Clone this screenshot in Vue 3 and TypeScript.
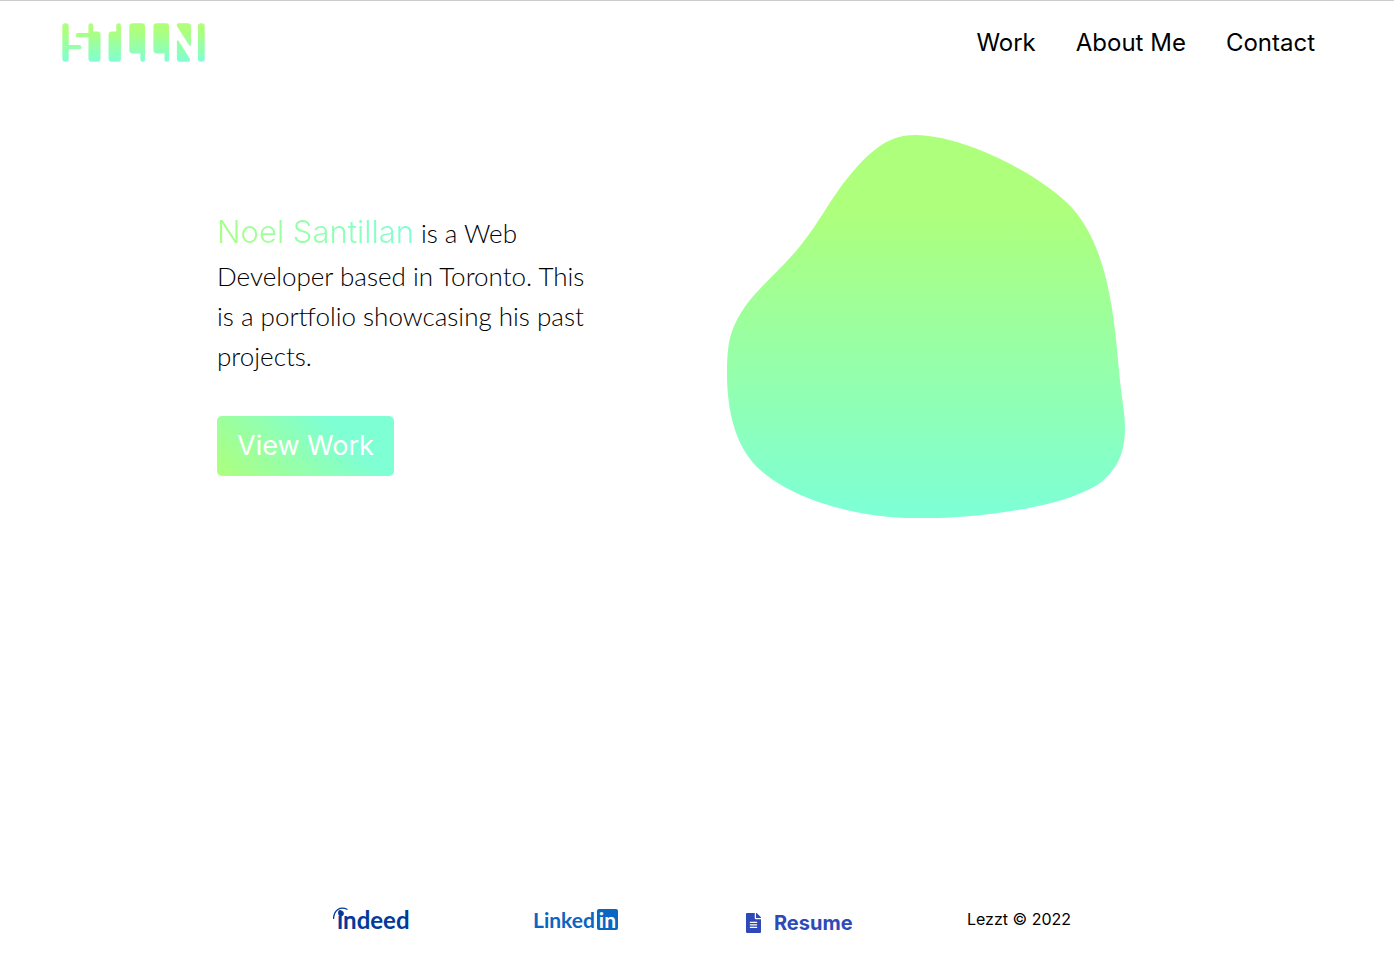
<script setup lang="ts">
interface NavLink {
  label: string
  href: string
}

const navLinks: NavLink[] = [
  { label: 'Work', href: '#work' },
  { label: 'About Me', href: '#about' },
  { label: 'Contact', href: '#contact' },
]
</script>

<template>
  <div class="page">
    <header class="header">
      <a class="logo" href="#home" aria-label="STLLN home">
        <svg viewBox="38 39 427 115" aria-hidden="true">
          <defs>
            <linearGradient id="logo-fill" gradientUnits="userSpaceOnUse" x1="0" y1="39" x2="0" y2="154">
              <stop offset="0.2" stop-color="#aeff7c" />
              <stop offset="1" stop-color="#7fffd4" />
            </linearGradient>
          </defs>
          <g fill="url(#logo-fill)">
            <path d="M48 39h1q9 0 9 9v56h31q7 0 7 6.500t-7 6.500H58v28q0 9-9 9h-1q-9 0-9-9V48q0-9 9-9z" />
            <path d="M124 39q7 0 7 7v18h12q10 0 10 10v70q0 10-10 10h-16q-10 0-10-10V81H86q-7 0-7-6.500t7-6.500h31V46q0-7 7-7z" />
            <path d="M207 39q7 0 7 7v98q0 10-10 10h-17q-10 0-10-10V74q0-10 10-10h13V46q0-7 7-7z" />
            <path d="M249 39h27q10 0 10 10v98q0 7-7 7t-7-7v-18h-23q-10 0-10-10V49q0-10 10-10z" />
            <path d="M321 39h27q10 0 10 10v98q0 7-7 7t-7-7v-18h-23q-10 0-10-10V49q0-10 10-10z" />
            <path d="M387 39h26q10 0 10 10v52q0 10-6 3L382 49q-4-10 5-10z" />
            <path d="M381 94q1-8 6-1l31 49q7 12-5 12h-24q-8 0-8-8z" />
            <rect x="444" y="39" width="20" height="115" rx="9" />
          </g>
        </svg>
      </a>
      <nav class="nav" aria-label="Main">
        <a v-for="link in navLinks" :key="link.href" :href="link.href">{{ link.label }}</a>
      </nav>
    </header>

    <main class="hero">
      <div class="intro">
        <p class="lead">
          <span class="name">Noel Santillan</span> is a Web Developer based in Toronto. This is a portfolio showcasing his past projects.
        </p>
        <button class="cta" type="button">View Work</button>
      </div>
      <svg class="blob" viewBox="36 30 1194 1150" aria-hidden="true">
        <defs>
          <linearGradient id="blob-fill" x1="0" y1="0" x2="0" y2="1">
            <stop offset="0.2" stop-color="#aeff7c" />
            <stop offset="0.97" stop-color="#7fffd4" />
          </linearGradient>
        </defs>
        <path
          fill="url(#blob-fill)"
          d="M600 30C740 30 965 140 1068 245C1170 355 1195 540 1210 715C1220 830 1230 860 1230 905C1230 990 1205 1030 1160 1070C1060 1145 800 1180 610 1180C420 1180 220 1120 125 1025C60 960 36 855 36 745C36 690 40 650 50 622C85 520 165 470 250 370C310 297 350 215 405 150C475 65 530 30 600 30Z"
        />
      </svg>
    </main>

    <footer class="footer">
      <a class="indeed" href="#indeed" aria-label="Indeed">
        <svg width="76" height="30" viewBox="0 0 76 30" aria-hidden="true">
          <path d="M0.500 15C1 6 7 2 14.500 5.500" fill="none" stroke="#003a9b" stroke-width="1.300" />
          <circle cx="8" cy="9.500" r="2.800" fill="#003a9b" />
          <text x="4" y="25" fill="#003a9b">indeed</text>
        </svg>
      </a>
      <a class="linkedin" href="#linkedin" aria-label="LinkedIn">
        <span>Linked</span><span class="badge">in</span>
      </a>
      <a class="resume" href="#resume">
        <svg width="15" height="20" viewBox="0 0 384 512" aria-hidden="true">
          <path
            fill="currentColor"
            d="M224 136V0H24C10.700 0 0 10.700 0 24v464c0 13.300 10.700 24 24 24h336c13.300 0 24-10.700 24-24V160H248c-13.200 0-24-10.800-24-24zm64 236c0 6.600-5.400 12-12 12H108c-6.600 0-12-5.400-12-12v-8c0-6.600 5.400-12 12-12h168c6.600 0 12 5.400 12 12v8zm0-64c0 6.600-5.400 12-12 12H108c-6.600 0-12-5.400-12-12v-8c0-6.600 5.400-12 12-12h168c6.600 0 12 5.400 12 12v8zm0-72v8c0 6.600-5.400 12-12 12H108c-6.600 0-12-5.400-12-12v-8c0-6.600 5.400-12 12-12h168c6.600 0 12 5.400 12 12zm96-114.100v6.100H256V0h6.100c6.400 0 12.500 2.500 17 7l97.900 98c4.500 4.500 7 10.600 7 16.900z"
          />
        </svg>
        <span>Resume</span>
      </a>
      <span class="copyright">Lezzt © 2022</span>
    </footer>
  </div>
</template>

<style>
body {
  margin: 0;
  background: #fff;
}
</style>

<style scoped>
.page {
  box-sizing: border-box;
  display: flex;
  flex-direction: column;
  min-height: 100vh;
  border-top: 1px solid #ccc;
  color: #000;
  font-family: Inter, 'Open Sans', sans-serif;
}

a {
  color: inherit;
  text-decoration: none;
}

.header {
  display: flex;
  align-items: center;
  justify-content: space-between;
  padding: 22px 79px 20px 62px;
}

.logo svg {
  display: block;
  width: 143px;
  height: 39px;
}

.nav {
  display: flex;
  gap: 40px;
  font-size: 24px;
  line-height: 32px;
}

.hero {
  box-sizing: border-box;
  display: grid;
  grid-template-columns: 1fr 1fr;
  align-items: center;
  width: 100%;
  max-width: 960px;
  margin: 0 auto;
  padding-top: 53px;
}

.intro {
  padding-top: 34px;
}

.lead {
  max-width: 384px;
  margin: 0 0 40px;
  font-family: Lato, sans-serif;
  font-size: 26px;
  font-weight: 300;
  line-height: 40px;
}

.name {
  display: inline-block;
  padding-bottom: 4px;
  background: linear-gradient(45deg, #aeff7c, #7fffd4 90%);
  background-clip: text;
  color: transparent;
  font-family: Inter, sans-serif;
  font-size: 31px;
  line-height: 40px;
}

.cta {
  display: block;
  height: 60px;
  padding: 0 20px;
  border: 0;
  border-radius: 5px;
  background: linear-gradient(45deg, #aeff7c, #7fffd4 70%);
  color: #fff;
  font-family: Inter, sans-serif;
  font-size: 27px;
  cursor: pointer;
}

.blob {
  display: block;
  width: 398px;
  margin-left: 30px;
}

.footer {
  display: grid;
  grid-template-columns: 200fr 213fr 221fr 104fr;
  align-items: center;
  width: 738px;
  max-width: 100%;
  margin: auto auto 23px;
  padding-left: 10px;
  white-space: nowrap;
}

.indeed svg {
  display: block;
}

.indeed text {
  font-family: Lato, sans-serif;
  font-size: 24px;
  font-weight: 700;
}

.linkedin {
  display: flex;
  align-items: center;
  gap: 2px;
  color: #0a66c2;
  font-family: Lato, sans-serif;
  font-size: 21px;
  font-weight: 700;
  line-height: 21px;
}

.badge {
  width: 21px;
  border-radius: 2px;
  background: #0a66c2;
  color: #fff;
  text-align: center;
}

.resume {
  display: flex;
  align-items: center;
  gap: 13px;
  padding-top: 8px;
  color: #3049b8;
  font-size: 20px;
  font-weight: 700;
  line-height: 24px;
}

.copyright {
  font-size: 16px;
  line-height: 24px;
}
</style>
